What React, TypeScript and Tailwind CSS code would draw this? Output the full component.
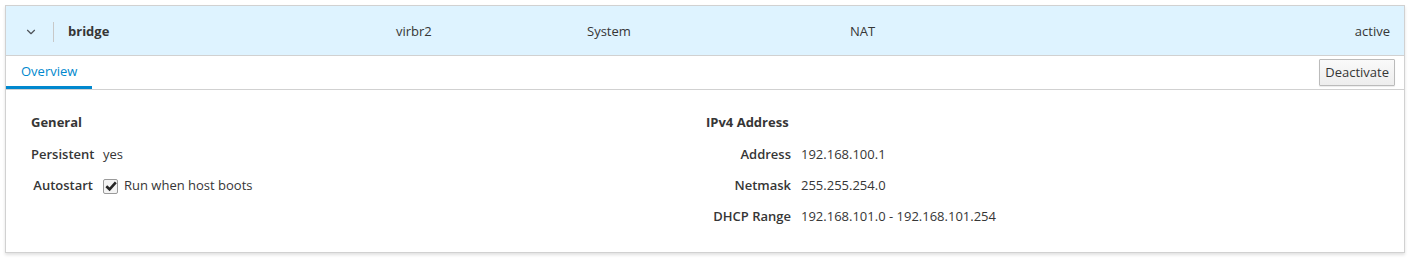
import React from 'react';
import { ChevronDown } from 'lucide-react';

const font = { fontFamily: '"Open Sans", "Noto Sans", sans-serif' };

const Row = ({ label, children, labelWidth }: { label: string; children: React.ReactNode; labelWidth: string }) => (
  <div className="flex items-center h-[20px]">
    <div className={`${labelWidth} text-right font-semibold text-[#363636] shrink-0 whitespace-nowrap`}>{label}</div>
    <div className="ml-[10px] flex items-center text-[#363636]">{children}</div>
  </div>
);

export default function App() {
  return (
    <div className="w-[1410px] h-[258px] bg-white p-[5px] text-[13px]" style={font}>
      <div className="border border-[#d1d1d1] shadow-[0_2px_3px_rgba(0,0,0,0.12)] bg-white h-[248px]">
        {/* header row */}
        <div className="flex items-center h-[50px] pt-[2px] bg-[#def3ff] border-b border-[#d1d1d1] text-[#363636]">
          <div className="w-[47px] flex justify-center pl-[3px] shrink-0">
            <ChevronDown size={14} strokeWidth={2} className="text-[#4d5258]" />
          </div>
          <div className="w-px h-[20px] bg-[#c8c8c8] shrink-0" />
          <div className="w-[342px] pl-[14px] font-bold shrink-0">bridge</div>
          <div className="w-[191px] shrink-0">virbr2</div>
          <div className="w-[263px] shrink-0">System</div>
          <div className="flex-1">NAT</div>
          <div className="pr-[14px]">active</div>
        </div>

        {/* tabs */}
        <div className="flex items-end justify-between h-[34px] border-b border-[#d1d1d1]">
          <div className="h-full flex items-center px-[15px] border-b-[3px] border-[#0088ce] text-[#0088ce] pt-[2px]">
            Overview
          </div>
          <button className="mb-[3px] mr-[9px] h-[27px] px-[5px] border border-[#bbb] rounded-[1px] bg-gradient-to-b from-[#fafafa] to-[#ededed] text-[#363636] shadow-[0_1px_1px_rgba(0,0,0,0.08)]">
            Deactivate
          </button>
        </div>

        {/* body */}
        <div className="flex pt-[23px]">
          <div className="w-[700px] pl-[25px] flex flex-col gap-[11px]">
            <div className="font-bold text-[#363636] h-[20px] flex items-center mb-[1px]">General</div>
            <Row label="Persistent" labelWidth="w-[62px]">yes</Row>
            <Row label="Autostart" labelWidth="w-[62px]">
              <span className="w-[15px] h-[15px] border border-[#9a9a9a] rounded-[2px] bg-[#f4f4f4] flex items-center justify-center mr-[6px]">
                <svg width="12" height="12" viewBox="0 0 12 12">
                  <path d="M1.3 6.2 L4.6 9.3 L10.8 2.4" fill="none" stroke="#262626" strokeWidth="2.6" />
                </svg>
              </span>
              Run when host boots
            </Row>
          </div>
          <div className="flex-1 flex flex-col gap-[11px]">
            <div className="font-bold text-[#363636] h-[20px] flex items-center mb-[1px]">IPv4 Address</div>
            <Row label="Address" labelWidth="w-[85px]">192.168.100.1</Row>
            <Row label="Netmask" labelWidth="w-[85px]">255.255.254.0</Row>
            <Row label="DHCP Range" labelWidth="w-[85px]">192.168.101.0 - 192.168.101.254</Row>
          </div>
        </div>
      </div>
    </div>
  );
}
